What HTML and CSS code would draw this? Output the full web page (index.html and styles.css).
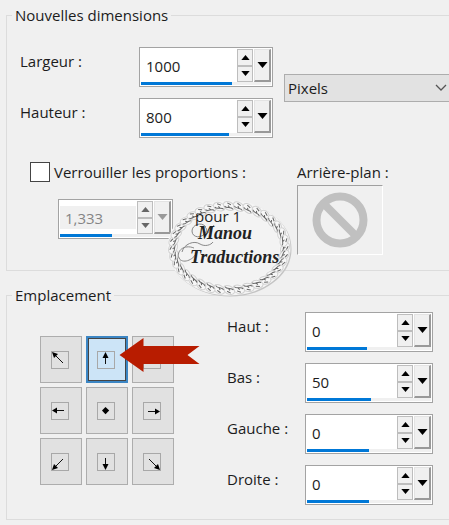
FILE: index.html
```html
<!DOCTYPE html>
<html lang="fr">
<head>
<meta charset="utf-8">
<title>Taille du support</title>
<link rel="stylesheet" href="styles.css">
</head>
<body>
<svg class="defs" aria-hidden="true">
  <symbol id="up" viewBox="0 0 10 6"><path d="M0 6 5 0l5 6z"/></symbol>
  <symbol id="down" viewBox="0 0 10 6"><path d="M0 0h10L5 6z"/></symbol>
</svg>
<form class="dialog">
  <fieldset class="group">
    <legend>Nouvelles dimensions</legend>
    <div class="dimensions">
      <label for="largeur">Largeur :</label>
      <div class="spinner" data-bar="70"><input id="largeur" value="1000"></div>
      <select class="units" aria-label="Unité"><option>Pixels</option></select>
      <label for="hauteur">Hauteur :</label>
      <div class="spinner" data-bar="68"><input id="hauteur" value="800"></div>
    </div>
    <div class="options">
      <div class="lock">
        <div class="check"><input type="checkbox" id="lock"><label for="lock">Verrouiller les proportions :</label></div>
        <div class="ratio">
          <div class="spinner" data-bar="47"><input value="1,333" aria-label="Proportions" disabled></div>
          <span class="per">pour 1</span>
          <svg class="seal" viewBox="0 0 130 104">
            <ellipse class="seal-shadow" cx="66" cy="53" rx="56" ry="42"/>
            <ellipse class="seal-fill" cx="65" cy="52" rx="56" ry="42"/>
            <g id="rope"></g>
            <path class="swash" d="M42 31c-5-6-14-2-14 4 0 7 10 8 14 1 2-4-2-7-5-4M30 52c-10-4-18 3-15 10 3 6 14 3 18-6M18 56c2-8 12-12 18-8 5 3 11 1 13-2M50 29c-3 5-6 8-10 11"/>
            <text x="34" y="43">Manou</text>
            <text x="26" y="67">Traductions</text>
          </svg>
        </div>
      </div>
      <div class="background">
        <label for="fond">Arrière-plan :</label>
        <button type="button" id="fond" class="swatch"><svg viewBox="0 0 56 56"><circle cx="28" cy="28" r="23.500"/><path d="m12 12 32 32"/></svg></button>
      </div>
    </div>
  </fieldset>

  <fieldset class="group">
    <legend>Emplacement</legend>
    <div class="placement">
      <div class="anchors">
        <button type="button" aria-label="Haut gauche"><svg viewBox="0 0 18 18"><rect x=".5" y=".5" width="17" height="17"/><path class="line" d="m12 12-9-9"/><path d="m1 1 6 2-4 4z"/></svg></button>
        <button type="button" class="selected" aria-label="Haut"><svg viewBox="0 0 18 18"><rect x=".5" y=".5" width="17" height="17"/><path class="line" d="M8.500 13V4"/><path d="m8.500 1 3 6h-6z"/></svg></button>
        <button type="button" aria-label="Haut droite"><svg viewBox="0 0 18 18"><rect x=".5" y=".5" width="17" height="17"/><path class="line" d="m6 12 9-9"/><path d="m17 1-6 2 4 4z"/></svg></button>
        <button type="button" aria-label="Gauche"><svg viewBox="0 0 18 18"><rect x=".5" y=".5" width="17" height="17"/><path class="line" d="M13 8.500H4"/><path d="m1 8.500 5-3v6z"/></svg></button>
        <button type="button" aria-label="Centre"><svg viewBox="0 0 18 18"><rect x=".5" y=".5" width="17" height="17"/><path d="m8.500 5 3.700 3.500-3.700 3.700L5 8.500z"/></svg></button>
        <button type="button" aria-label="Droite"><svg viewBox="0 0 18 18"><rect x=".5" y=".5" width="17" height="17"/><path class="line" d="M5 9.500h9"/><path d="m17 9.500-5-3v6z"/></svg></button>
        <button type="button" aria-label="Bas gauche"><svg viewBox="0 0 18 18"><rect x=".5" y=".5" width="17" height="17"/><path class="line" d="m12 6-9 9"/><path d="m1 17 2-6 4 4z"/></svg></button>
        <button type="button" aria-label="Bas"><svg viewBox="0 0 18 18"><rect x=".5" y=".5" width="17" height="17"/><path class="line" d="M8.500 5v9"/><path d="m8.500 17 3-6h-6z"/></svg></button>
        <button type="button" aria-label="Bas droite"><svg viewBox="0 0 18 18"><rect x=".5" y=".5" width="17" height="17"/><path class="line" d="m6 6 9 9"/><path d="m17 17-6-2 4-4z"/></svg></button>
        <svg class="pointer" viewBox="0 0 80 34"><path d="M0 17 24 0v8h56L68 17l12 9H24v8z"/></svg>
      </div>
      <div class="margins">
        <label for="haut">Haut :</label>
        <div class="spinner" data-bar="48"><input id="haut" value="0"></div>
        <label for="bas">Bas :</label>
        <div class="spinner" data-bar="52"><input id="bas" value="50"></div>
        <label for="gauche">Gauche :</label>
        <div class="spinner" data-bar="50"><input id="gauche" value="0"></div>
        <label for="droite">Droite :</label>
        <div class="spinner" data-bar="50"><input id="droite" value="0"></div>
      </div>
    </div>
  </fieldset>
</form>
<script src="script.js"></script>
</body>
</html>
```
FILE: styles.css
```css
* { box-sizing: border-box; }
body {
  margin: 0;
  background: #f0f0f0;
  color: #1c1c1c;
  font: 15px/20px "Open Sans", "Noto Sans", sans-serif;
  overflow-x: hidden;
}
.defs { position: absolute; width: 0; height: 0; }
.dialog { display: flex; flex-direction: column; gap: 14px; padding: 5px 0 5px 6px; }
.group {
  min-width: 0;
  margin: 0;
  padding: 0;
  border: 1px solid #dcdcdc;
  border-right: 0;
}
legend { margin-left: 5px; padding: 0 3px; }
button, input, select { font: inherit; color: inherit; margin: 0; }
button { padding: 0; }

.dimensions {
  display: grid;
  grid-template-columns: 108px 134px 1fr;
  column-gap: 11px;
  row-gap: 11px;
  padding: 22px 0 0 13px;
}
.dimensions label, .margins label { padding-top: 4px; }
.dimensions label { margin-right: -11px; }
.dimensions .spinner { grid-column: 2; }
.units {
  grid-column: 3;
  grid-row: 1 / 3;
  align-self: center;
  height: 28px;
  margin-bottom: 10px;
  padding: 0 3px;
  border: 1px solid #adadad;
  border-right: 0;
  border-radius: 0;
  appearance: none;
  background: #e2e2e2 url("data:image/svg+xml,%3Csvg xmlns='http://www.w3.org/2000/svg' width='12' height='8'%3E%3Cpath d='M1 1l5 5 5-5' fill='none' stroke='%23555' stroke-width='1.3'/%3E%3C/svg%3E") no-repeat right 2px center;
}

.spinner {
  display: flex;
  flex-direction: column;
  height: 40px;
  padding: 1px;
  border: 1px solid #a3a3a3;
  background: #fff;
}
.spinner-row { display: flex; gap: 1px; height: 33px; }
.spinner input {
  flex: 1;
  min-width: 0;
  border: 0;
  padding: 0 0 0 5px;
  background: transparent;
  outline: 0;
}
.spinner input:disabled {
  color: #858585;
  background: linear-gradient(#fff 5px, #f0f0f0 5px, #f0f0f0 28px, #fff 28px);
}
.steps { display: flex; flex-direction: column; width: 16px; }
.steps button {
  flex: 1;
  display: grid;
  place-items: center;
  border: 1px solid #bdbdbd;
  background: #f0f0f0;
}
.spinner svg { display: block; width: 9px; height: 5px; fill: #000; }
.drop {
  display: grid;
  place-items: center;
  width: 17px;
  border: 1px solid #e3e3e3;
  border-right: 2px solid #999;
  border-bottom: 2px solid #999;
  background: #f0f0f0;
}
.spinner .drop svg { width: 11px; height: 6px; }
.spinner.disabled svg { fill: #666; }
.spinner.disabled .drop svg { fill: #999; }
.track { height: 3px; background: #f0f0f0; }
.bar { height: 3px; background: #0078d7; }

.options {
  display: grid;
  grid-template-columns: 277px 1fr;
  padding: 24px 0 15px 13px;
}
.check { display: flex; align-items: center; gap: 4px; padding-left: 10px; }
.check input {
  appearance: none;
  width: 20px;
  height: 20px;
  border: 1px solid #444;
  background: #fff;
}
.ratio {
  position: relative;
  display: flex;
  gap: 22px;
  padding: 17px 0 0 38px;
}
.ratio .spinner { width: 115px; }
.per { position: relative; z-index: 2; padding-top: 7px; }
.seal { position: absolute; left: 144px; top: 14px; width: 130px; height: 104px; overflow: visible; }
.seal-shadow { fill: none; stroke: #c4c4c4; stroke-width: 11; }
.seal-fill { fill: #f3f3f3; stroke: #f5f5f5; stroke-width: 11; }
.seal .strand { fill: #f7f7f7; stroke: #d2d2d2; stroke-width: 1; }
.seal .twist { fill: none; stroke: #666; stroke-width: 1; }
.seal .swash { fill: none; stroke: #888; stroke-width: 1; }
.seal text { font: italic bold 18px "Liberation Serif", serif; fill: #222; }
.background { display: flex; flex-direction: column; align-items: flex-start; gap: 3px; }
.swatch {
  display: grid;
  place-items: center;
  width: 86px;
  height: 70px;
  border: 1px solid #a0a0a0;
  border-right-color: #fff;
  border-bottom-color: #fff;
  background: #f0f0f0;
}
.swatch svg { width: 56px; height: 56px; fill: none; stroke: #c0c0c0; stroke-width: 8; }

.placement { display: flex; gap: 53px; padding: 7px 0 14px 33px; }
.anchors {
  position: relative;
  display: grid;
  grid-template-columns: repeat(3, 42px);
  grid-auto-rows: 47px;
  gap: 4px;
  align-self: flex-start;
  padding-top: 24px;
}
.anchors button {
  display: grid;
  place-items: center;
  padding-right: 2px;
  border: 1px solid #adadad;
  background: #e1e1e1;
}
.anchors .selected {
  border: 2px solid #3c86c4;
  outline: 1px solid #444;
  outline-offset: -3px;
  background: #cce4f7;
}
.anchors button svg { width: 18px; height: 18px; }
.anchors rect { fill: none; stroke: #a8a8a8; }
.anchors .line { fill: none; stroke: #111; }
.anchors .pointer { position: absolute; left: 79px; top: 26px; width: 81px; height: 34px; fill: #b81c00; }
.margins {
  display: grid;
  grid-template-columns: 78px 128px;
  row-gap: 11px;
}
```
FILE: script.js
```js
// Adds the step buttons, drop button and value bar to each number field.
const icon = (name) => `<svg><use href="#${name}"/></svg>`;
document.querySelectorAll(".spinner").forEach((spinner) => {
  const input = spinner.querySelector("input");
  const off = input.disabled ? "disabled" : "";
  if (off) spinner.classList.add("disabled");
  const row = document.createElement("div");
  row.className = "spinner-row";
  row.append(input);
  row.insertAdjacentHTML("beforeend",
    `<div class="steps"><button type="button" aria-label="Augmenter" ${off}>${icon("up")}</button>` +
    `<button type="button" aria-label="Diminuer" ${off}>${icon("down")}</button></div>` +
    `<button type="button" class="drop" aria-label="Curseur" ${off}>${icon("down")}</button>`);
  spinner.append(row);
  spinner.insertAdjacentHTML("beforeend",
    `<div class="track"><div class="bar" style="width:${spinner.dataset.bar}%"></div></div>`);
});

// Braided rope around the seal.
let rope = "";
const links = 36;
for (let i = 0; i < links; i++) {
  const a = (i / links) * Math.PI * 2;
  const x = 65 + 56 * Math.cos(a);
  const y = 52 + 42 * Math.sin(a);
  const turn = Math.atan2(42 * Math.cos(a), -56 * Math.sin(a)) * 180 / Math.PI;
  rope += `<g transform="translate(${x} ${y}) rotate(${turn + 28})">` +
    `<ellipse class="strand" rx="6" ry="4"/>` +
    `<path class="twist" d="M-4 2C-1 4 2-1 5 1M-3-2h4M-1 0l2 1"/></g>`;
}
document.getElementById("rope").innerHTML = rope;
```
